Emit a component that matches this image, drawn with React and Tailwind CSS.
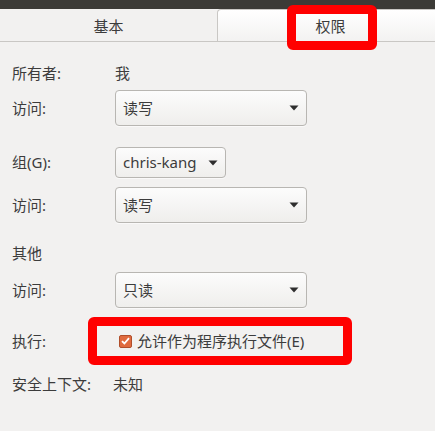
import React from "react";

const font = { fontFamily: '"Noto Sans", "Noto Sans CJK SC", sans-serif' };

function Arrow() {
  return (
    <svg width="10" height="6" viewBox="0 0 10 6" className="block">
      <path d="M0.5 0.5 L9.5 0.5 L5 5.5 Z" fill="#2e2e2e" />
    </svg>
  );
}

function Combo({ text, w, h }) {
  return (
    <div
      className={`flex items-center justify-between rounded-[4px] border border-[#b8b6b2] bg-gradient-to-b from-[#fcfcfc] to-[#efeeec] pl-[7px] pr-[7px] text-[#3c3c3c] shadow-[0_1px_0_rgba(255,255,255,0.6)] ${w} ${h}`}
    >
      <span className="leading-none">{text}</span>
      <Arrow />
    </div>
  );
}

export default function App() {
  return (
    <div
      className="relative h-[431px] w-[435px] overflow-hidden bg-[#f2f1f0] text-[15px] text-[#3c3c3c]"
      style={font}
    >
      <div className="h-[9px] bg-[#3c3b37]" />
      <div className="flex h-[33px] border-b border-[#c9c7c4]">
        <div className="flex w-[217px] items-center justify-center pt-[2px]">基本</div>
        <div className="flex flex-1 items-center justify-center rounded-tl-[4px] border-l border-t border-[#c9c7c4] bg-gradient-to-b from-[#ffffff] to-[#f3f2f1] pt-[2px] pl-[8px]">
          权限
        </div>
      </div>

      <div className="flex flex-col px-[12px] pt-[20px]">
        <div className="flex h-[22px] items-center">
          <span className="w-[103px]">所有者:</span>
          <span>我</span>
        </div>
        <div className="mt-[6px] flex items-center">
          <span className="w-[103px]">访问:</span>
          <Combo text="读写" w="w-[192px]" h="h-[36px]" />
        </div>
        <div className="mt-[21px] flex items-center">
          <span className="w-[103px]">组(G):</span>
          <Combo text="chris-kang" w="w-[111px]" h="h-[31px]" />
        </div>
        <div className="mt-[9px] flex items-center">
          <span className="w-[103px]">访问:</span>
          <Combo text="读写" w="w-[192px]" h="h-[36px]" />
        </div>
        <div className="mt-[19px] flex h-[22px] items-center">
          <span>其他</span>
        </div>
        <div className="mt-[8px] flex items-center">
          <span className="w-[103px]">访问:</span>
          <Combo text="只读" w="w-[192px]" h="h-[36px]" />
        </div>
        <div className="mt-[22px] flex h-[22px] items-center">
          <span className="w-[107px]">执行:</span>
          <span className="mr-[5px] flex h-[13px] w-[13px] items-center justify-center rounded-[2px] border border-[#b04e2a] bg-[#e06a3e]">
            <svg width="9" height="8" viewBox="0 0 9 8">
              <path d="M1 4.2 L3.4 6.5 L8 1.2" stroke="#fff" strokeWidth="1.8" fill="none" />
            </svg>
          </span>
          <span>允许作为程序执行文件(E)</span>
        </div>
        <div className="mt-[21px] flex h-[22px] items-center">
          <span className="w-[101px]">安全上下文:</span>
          <span>未知</span>
        </div>
      </div>

      <div className="pointer-events-none absolute left-[287px] top-[5px] h-[45px] w-[90px] rounded-[6px] border-[9px] border-[#ff0000]" />
      <div className="pointer-events-none absolute left-[88px] top-[317px] h-[48px] w-[264px] rounded-[6px] border-[9px] border-[#ff0000]" />
    </div>
  );
}
